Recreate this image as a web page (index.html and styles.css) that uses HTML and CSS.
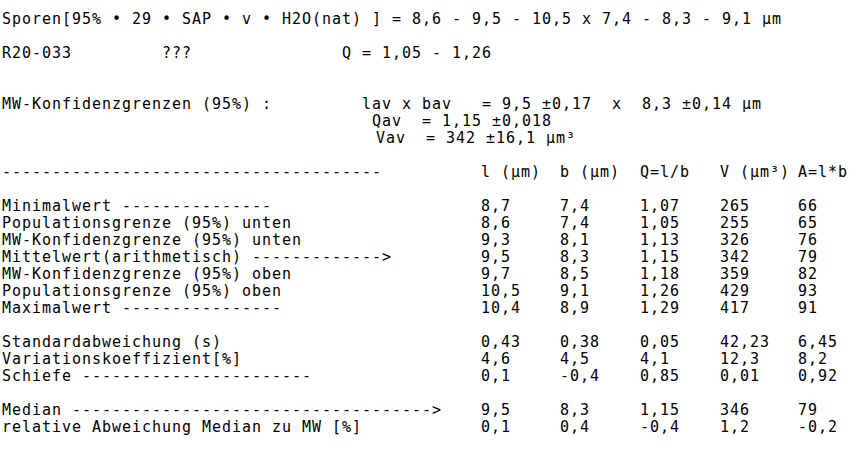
FILE: index.html
```html
<!DOCTYPE html>
<html lang="de">
<head>
    <meta charset="UTF-8">
    <title>Sporen R20-033</title>
    <link rel="stylesheet" href="styles.css">
</head>
<body>
    <div class="sheet">
        <div class="line">Sporen[95% • 29 • SAP • v • H2O(nat) ] = 8,6 - 9,5 - 10,5 x 7,4 - 8,3 - 9,1 µm</div>
        <div class="line"></div>
        <div class="line">R20-033         ???               Q = 1,05 - 1,26</div>
        <div class="line"></div>
        <div class="line"></div>

        <!-- Konfidenzgrenzen -->
        <div class="line">MW-Konfidenzgrenzen (95%) :         lav x bav   = 9,5 ±0,17  x  8,3 ±0,14 µm</div>
        <div class="line shift-q">Qav  = 1,15 ±0,018</div>
        <div class="line shift-v">Vav  = 342 ±16,1 µm³</div>
        <div class="line"></div>

        <!-- Tabelle -->
        <div class="row">
            <span>--------------------------------------</span>
            <span>l (µm)</span><span>b (µm)</span><span>Q=l/b</span><span>V (µm³)</span><span>A=l*b</span>
        </div>
        <div class="line"></div>
        <div class="row"><span>Minimalwert ---------------</span><span>8,7</span><span>7,4</span><span>1,07</span><span>265</span><span>66</span></div>
        <div class="row"><span>Populationsgrenze (95%) unten</span><span>8,6</span><span>7,4</span><span>1,05</span><span>255</span><span>65</span></div>
        <div class="row"><span>MW-Konfidenzgrenze (95%) unten</span><span>9,3</span><span>8,1</span><span>1,13</span><span>326</span><span>76</span></div>
        <div class="row"><span>Mittelwert(arithmetisch) -------------></span><span>9,5</span><span>8,3</span><span>1,15</span><span>342</span><span>79</span></div>
        <div class="row"><span>MW-Konfidenzgrenze (95%) oben</span><span>9,7</span><span>8,5</span><span>1,18</span><span>359</span><span>82</span></div>
        <div class="row"><span>Populationsgrenze (95%) oben</span><span>10,5</span><span>9,1</span><span>1,26</span><span>429</span><span>93</span></div>
        <div class="row"><span>Maximalwert ----------------</span><span>10,4</span><span>8,9</span><span>1,29</span><span>417</span><span>91</span></div>
        <div class="line"></div>
        <div class="row"><span>Standardabweichung (s)</span><span>0,43</span><span>0,38</span><span>0,05</span><span>42,23</span><span>6,45</span></div>
        <div class="row"><span>Variationskoeffizient[%]</span><span>4,6</span><span>4,5</span><span>4,1</span><span>12,3</span><span>8,2</span></div>
        <div class="row"><span>Schiefe -----------------------</span><span>0,1</span><span>-0,4</span><span>0,85</span><span>0,01</span><span>0,92</span></div>
        <div class="line"></div>
        <div class="row"><span>Median ------------------------------------></span><span>9,5</span><span>8,3</span><span>1,15</span><span>346</span><span>79</span></div>
        <div class="row"><span>relative Abweichung Median zu MW [%]</span><span>0,1</span><span>0,4</span><span>-0,4</span><span>1,2</span><span>-0,2</span></div>
    </div>
</body>
</html>
```

FILE: styles.css
```css
body {
    margin: 0;
    background-color: #fff;
    color: #000;
}
.sheet {
    padding: 11px 0 0 2px;
    font-family: "DejaVu Sans Mono", monospace;
    font-size: 15px;
    letter-spacing: 0.97px;
    line-height: 17px;
}
.line {
    height: 17px;
    white-space: pre;
}
.shift-q {
    padding-left: 370px;
}
.shift-v {
    padding-left: 374px;
}
.row {
    display: grid;
    grid-template-columns: 479px 79px 80px 80px 78px 1fr;
    height: 17px;
    white-space: pre;
}
```
